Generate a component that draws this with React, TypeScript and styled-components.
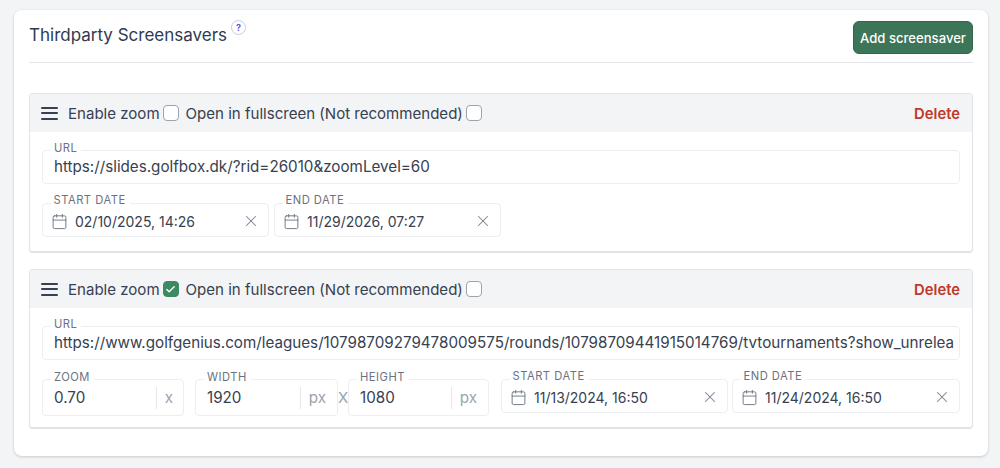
import React from 'react';
import styled, { createGlobalStyle } from 'styled-components';
import { Calendar, Check, X } from 'lucide-react';

const GlobalStyle = createGlobalStyle`
  html, body {
    margin: 0;
    padding: 0;
    background: #f3f4f6;
    font-family: Inter, "Liberation Sans", sans-serif;
  }
  * { box-sizing: border-box; }
`;

const Page = styled.div`
  height: 468px;
  overflow: hidden;
  padding: 10px 12px 0 14px;
`;

const Card = styled.section`
  background: #fff;
  border-radius: 8px;
  height: 446px;
  padding: 11px 15px 0;
  box-shadow: 0 1px 3px rgba(0, 0, 0, 0.18);
`;

const CardHeader = styled.header`
  display: flex;
  justify-content: space-between;
  align-items: flex-start;
  height: 42px;
  border-bottom: 1px solid #e5e7eb;
  margin-bottom: 30px;
`;

const TitleWrap = styled.div`
  display: flex;
  align-items: flex-start;
  padding-top: 2px;
`;

const Title = styled.h2`
  margin: 0;
  font-size: 17px;
  line-height: 24px;
  font-weight: 400;
  color: #2f3a4f;
`;

const HelpBadge = styled.span`
  width: 15px;
  height: 15px;
  margin: -3px 0 0 4px;
  border-radius: 50%;
  border: 1px solid #c9cbe0;
  display: flex;
  align-items: center;
  justify-content: center;
  font-size: 9px;
  font-weight: 700;
  color: #5b5bd6;
`;

const AddButton = styled.button`
  width: 120px;
  height: 33px;
  border: 1px solid #35664c;
  border-radius: 6px;
  background: #3c7558;
  color: #fff;
  font-family: inherit;
  font-size: 13.1px;
  font-weight: 500;
  padding: 0;
`;

const Panel = styled.article`
  border: 1px solid #e0e2e7;
  border-bottom-width: 2px;
  border-radius: 4px;
  margin-bottom: 16px;
  height: 160px;
  overflow: hidden;
`;

const PanelHeader = styled.div`
  height: 38px;
  background: #f3f4f6;
  display: flex;
  align-items: center;
  padding: 0 12px 0 11px;
  font-size: 15.05px;
  color: #374151;
`;

const Burger = styled.span`
  width: 17px;
  height: 13px;
  margin-right: 10px;
  display: flex;
  flex-direction: column;
  justify-content: space-between;

  i {
    display: block;
    height: 2px;
    background: #374151;
    border-radius: 1px;
  }
`;

const CheckLabel = styled.span`
  display: flex;
  align-items: center;
  margin-right: 7px;
`;

const Box = styled.span<{ $on?: boolean }>`
  width: 16px;
  height: 16px;
  margin-left: 3px;
  border-radius: 4px;
  border: 1px solid ${(p) => (p.$on ? '#3c8a63' : '#9ca3af')};
  background: ${(p) => (p.$on ? '#3c8a63' : '#fff')};
  display: flex;
  align-items: center;
  justify-content: center;
  color: #fff;
`;

const DeleteLink = styled.span`
  margin: 1px 0 0 auto;
  font-size: 14.8px;
  font-weight: 600;
  color: #c0392b;
`;

const PanelBody = styled.div`
  padding: 18px 12px 0;
  display: flex;
  flex-direction: column;
  gap: 19px;
`;

const FieldRow = styled.div`
  display: flex;
  align-items: flex-start;
`;

const Field = styled.div<{ $width?: number; $tall?: boolean; $left?: number }>`
  position: relative;
  flex: ${(p) => (p.$width ? `0 0 ${p.$width}px` : '1 1 0')};
  min-width: 0;
  margin-left: ${(p) => p.$left ?? 0}px;
  height: ${(p) => (p.$tall ? 37 : 34)}px;
  border: 1px solid #eceef1;
  border-radius: 4px;
  background: #fff;
  display: flex;
  align-items: center;
  padding: 0 11px;
  font-size: 15.2px;
  color: #374151;
`;

const DateBox = styled(Field)`
  font-size: 14px;
  padding-top: 2px;
`;

const FieldLabel = styled.label<{ $date?: boolean }>`
  position: absolute;
  top: ${(p) => (p.$date ? -11 : -10)}px;
  left: ${(p) => (p.$date ? 7.5 : 8)}px;
  padding: 0 4px 0 3px;
  background: #fff;
  font-size: 11.2px;
  line-height: 14px;
  letter-spacing: 0.5px;
  color: #6b7280;
`;

const Value = styled.span`
  flex: 1;
  min-width: 0;
  white-space: nowrap;
`;

const UrlValue = styled(Value)`
  margin-top: -1px;
`;

const Unit = styled.span<{ $tight?: boolean }>`
  flex: 0 0 auto;
  height: 22px;
  margin-right: -11px;
  border-left: 1px solid #e5e7eb;
  padding: 0 ${(p) => (p.$tight ? 10 : 11)}px 0 8px;
  line-height: 22px;
  color: #9ca3af;
`;

const Times = styled.span`
  flex: 0 0 10px;
  width: 10px;
  font-size: 15px;
  line-height: 37px;
  color: #9ca3af;
`;

const CalendarIcon = styled(Calendar)`
  color: #6b7280;
  margin: 0 7px 0 -3px;
  flex: none;
`;

const ClearIcon = styled(X)`
  color: #7b8290;
  margin: -1px -3px 0 0;
  flex: none;
`;

const DateField = ({ label, value, width, left }: { label: string; value: string; width: number; left?: number }) => (
  <DateBox $width={width} $left={left}>
    <FieldLabel $date>{label}</FieldLabel>
    <CalendarIcon size={17} strokeWidth={1.3} />
    <Value>{value}</Value>
    <ClearIcon size={18} strokeWidth={1.4} />
  </DateBox>
);

const UnitField = ({ label, value, unit, width, left }: { label: string; value: string; unit: string; width: number; left?: number }) => (
  <Field $width={width} $left={left} $tall>
    <FieldLabel>{label}</FieldLabel>
    <Value>{value}</Value>
    <Unit $tight={unit === 'x'}>{unit}</Unit>
  </Field>
);

const Header = ({ zoom }: { zoom: boolean }) => (
  <PanelHeader>
    <Burger><i /><i /><i /></Burger>
    <CheckLabel>
      Enable zoom
      <Box $on={zoom}>{zoom && <Check size={11} strokeWidth={3} />}</Box>
    </CheckLabel>
    <CheckLabel>
      Open in fullscreen (Not recommended)
      <Box />
    </CheckLabel>
    <DeleteLink>Delete</DeleteLink>
  </PanelHeader>
);

const App: React.FC = () => (
  <>
    <GlobalStyle />
    <Page>
      <Card>
        <CardHeader>
          <TitleWrap>
            <Title>Thirdparty Screensavers</Title>
            <HelpBadge>?</HelpBadge>
          </TitleWrap>
          <AddButton>Add screensaver</AddButton>
        </CardHeader>

        <Panel>
          <Header zoom={false} />
          <PanelBody>
            <FieldRow>
              <Field>
                <FieldLabel>URL</FieldLabel>
                <UrlValue>https://slides.golfbox.dk/?rid=26010&amp;zoomLevel=60</UrlValue>
              </Field>
            </FieldRow>
            <FieldRow>
              <DateField label="START DATE" value="02/10/2025, 14:26" width={227} />
              <DateField label="END DATE" value="11/29/2026, 07:27" width={227} left={5} />
            </FieldRow>
          </PanelBody>
        </Panel>

        <Panel>
          <Header zoom />
          <PanelBody>
            <FieldRow>
              <Field>
                <FieldLabel>URL</FieldLabel>
                <UrlValue>https://www.golfgenius.com/leagues/10798709279478009575/rounds/10798709441915014769/tvtournaments?show_unrelea</UrlValue>
              </Field>
            </FieldRow>
            <FieldRow>
              <UnitField label="ZOOM" value="0.70" unit="x" width={142} />
              <UnitField label="WIDTH" value="1920" unit="px" width={143} left={11} />
              <Times>X</Times>
              <UnitField label="HEIGHT" value="1080" unit="px" width={141} />
              <DateField label="START DATE" value="11/13/2024, 16:50" width={227} left={12} />
              <DateField label="END DATE" value="11/24/2024, 16:50" width={228} left={4} />
            </FieldRow>
          </PanelBody>
        </Panel>
      </Card>
    </Page>
  </>
);

export default App;
